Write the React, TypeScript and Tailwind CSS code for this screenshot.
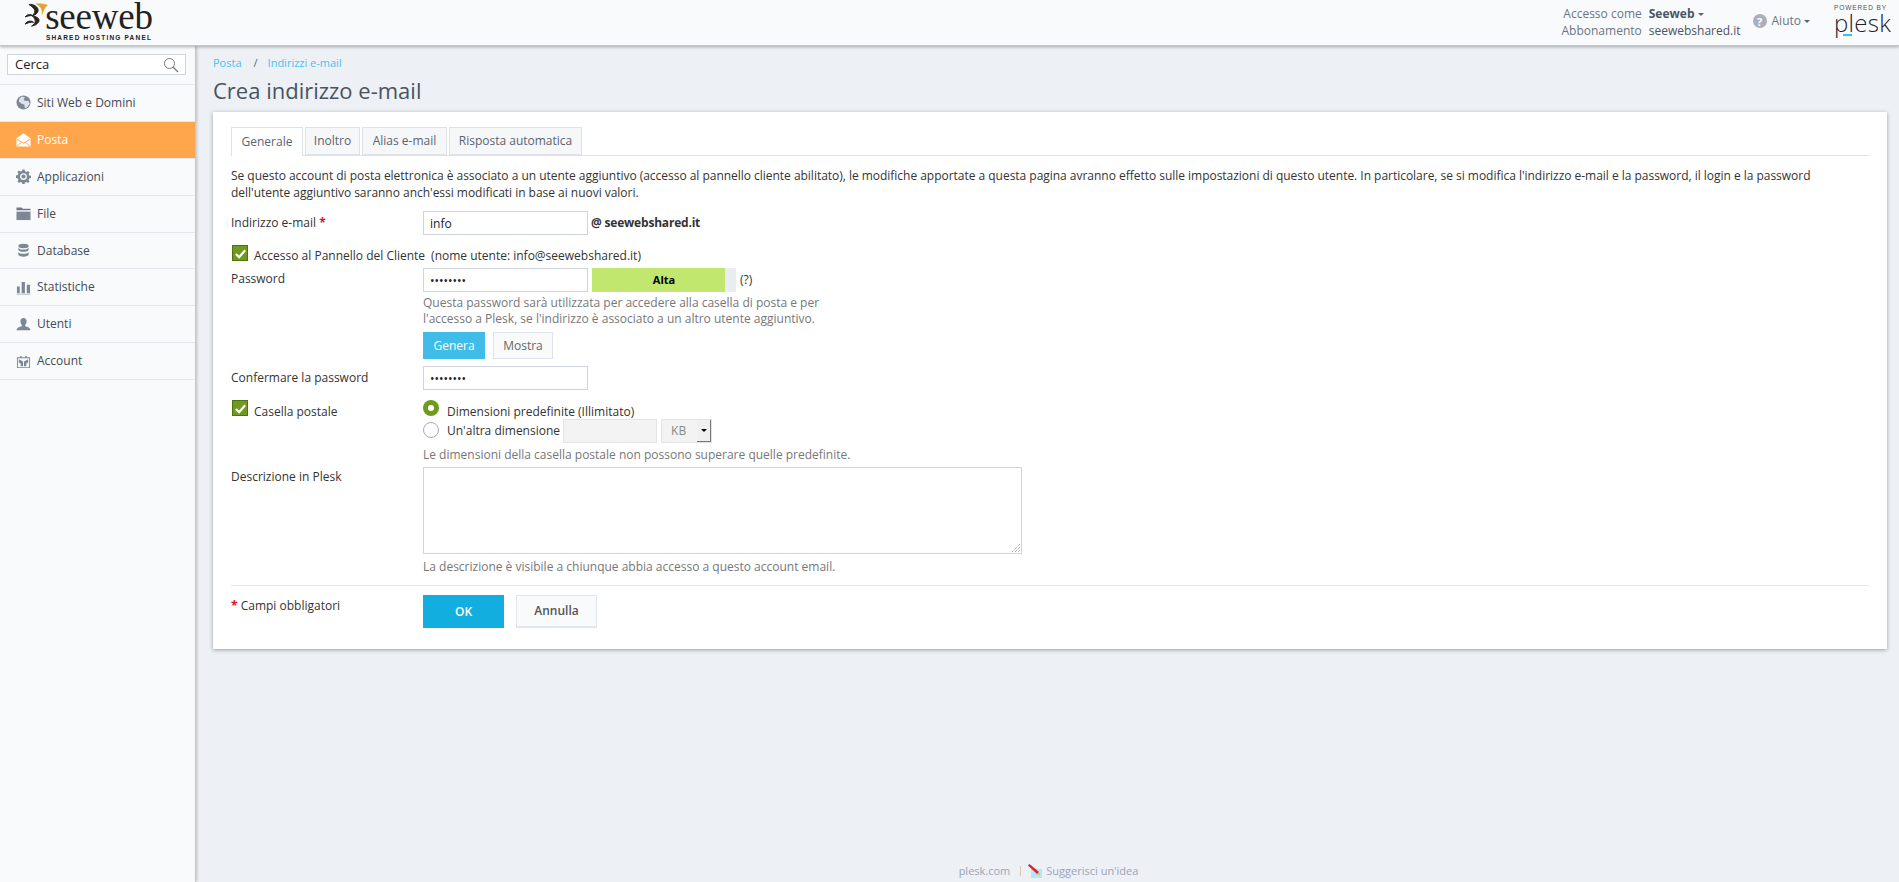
import React from "react";

const IconGlobe = () => (
  <svg viewBox="0 0 16 16" className="w-[15px] h-[15px]">
    <circle cx="8" cy="8" r="7.5" fill="#7d8894" />
    <path d="M6 1.500 9.500 2.500 8 5 10 6.500 13 6 14.800 9 12 13 9.500 14.500 9 10.500 5.500 9 3 7 3.500 4z" fill="#dfe3e8" />
  </svg>
);
const IconMail = () => (
  <svg viewBox="0 0 16 16" className="w-[16px] h-[16px]">
    <path d="M0.500 6 8 0.800 15.500 6V15H0.500z" fill="#fff" />
    <path d="M1 7.200 8 11.400 15 7.200M1 14.600 6 10.400M15 14.600 10 10.400" fill="none" stroke="#ffa64d" strokeWidth="1" />
  </svg>
);
const IconGear = () => (
  <svg viewBox="0 0 16 16" className="w-[15px] h-[15px]">
    <path
      d="M6.800 0.500h2.400l.4 2 1.500.6 1.700-1.100 1.700 1.700-1.100 1.700.6 1.500 2 .4v2.400l-2 .4-.6 1.500 1.100 1.700-1.700 1.700-1.700-1.100-1.500.6-.4 2H6.800l-.4-2-1.500-.6-1.700 1.100-1.700-1.700 1.100-1.700-.6-1.500-2-.4V6.800l2-.4.6-1.500L1.500 3.200l1.700-1.700 1.700 1.100 1.500-.6z"
      fill="#7d8894"
    />
    <circle cx="8" cy="8" r="3.600" fill="#f9fafc" />
    <circle cx="8" cy="8" r="2.200" fill="#7d8894" />
  </svg>
);
const IconFolder = () => (
  <svg viewBox="0 0 16 16" className="w-[15px] h-[15px]">
    <path d="M0.500 1.500h5.500l1.200 1.500h8.300v1.500H0.500z" fill="#6f7a86" />
    <path d="M0.500 6h15v9h-15z" fill="#7d8894" />
  </svg>
);
const IconDb = () => (
  <svg viewBox="0 0 16 16" className="w-[15px] h-[15px]">
    <ellipse cx="8" cy="3.200" rx="5.500" ry="2.400" fill="#7d8894" />
    <path d="M2.500 5v2.200C2.500 8.500 5 9.400 8 9.400s5.500-.9 5.500-2.200V5C13 6.300 10.500 7 8 7S3 6.300 2.500 5z" fill="#7d8894" />
    <path d="M2.500 9.500v2.700C2.500 13.500 5 14.600 8 14.600s5.500-1.100 5.500-2.400V9.500C13 10.800 10.500 11.500 8 11.500S3 10.800 2.500 9.500z" fill="#7d8894" />
  </svg>
);
const IconChart = () => (
  <svg viewBox="0 0 16 16" className="w-[15px] h-[15px]">
    <path d="M1 7h3v7H1zM6 2h3.500v12H6zM11.500 5H15v9h-3.500z" fill="#7d8894" />
    <path d="M0.500 14.700h15v1h-15z" fill="#b6bcc4" />
  </svg>
);
const IconUser = () => (
  <svg viewBox="0 0 16 16" className="w-[15px] h-[15px]">
    <path d="M8 1c2 0 3.300 1.500 3.300 3.600 0 1.800-.8 3.300-1.500 4v1.300c1.800.5 5.200 1.200 5.700 4.100H.5c.5-2.900 3.900-3.600 5.700-4.100V8.600c-.7-.7-1.500-2.200-1.500-4C4.700 2.500 6 1 8 1z" fill="#7d8894" />
  </svg>
);
const IconAccount = () => (
  <svg viewBox="0 0 16 16" className="w-[15px] h-[15px]">
    <path d="M1 3.500h3.500V2h1.500v1.500h4V2h1.500v1.500H15v11.500H1zM2 4.500v9.500h12V4.500z" fill="#7d8894" />
    <path d="M3 5.500 7.500 8v5H5V10L3 9zM13 5.500 8.500 8v5H11V10L13 9z" fill="#7d8894" />
  </svg>
);

const NAV = [
  { label: "Siti Web e Domini", icon: <IconGlobe /> },
  { label: "Posta", icon: <IconMail />, active: true },
  { label: "Applicazioni", icon: <IconGear /> },
  { label: "File", icon: <IconFolder /> },
  { label: "Database", icon: <IconDb /> },
  { label: "Statistiche", icon: <IconChart /> },
  { label: "Utenti", icon: <IconUser /> },
  { label: "Account", icon: <IconAccount /> },
];

const Caret = () => (
  <span className="inline-block ml-[3px] align-middle w-0 h-0 border-x-[3px] border-x-transparent border-t-[3px] border-t-[#5a6675]" />
);

const Check = () => (
  <span className="flex w-4 h-4 ml-px items-center justify-center bg-[#6d9a1f] border border-[#4d7410] shrink-0">
    <svg viewBox="0 0 14 14" className="w-[13px] h-[13px]">
      <path d="M2 7.500 5.500 11 12 3.500" fill="none" stroke="#fff" strokeWidth="2.400" />
    </svg>
  </span>
);

const TextInput = ({ value, type = "text" }: { value: string; type?: string }) => (
  <input
    readOnly
    type={type}
    value={value}
    className="w-[165px] h-6 px-[6px] border border-[#cfd4de] bg-white text-[12px] text-[#222] outline-none"
  />
);

const Tab = ({ label, width, active }: { label: string; width: string; active?: boolean }) => (
  <div
    className={
      width +
      " flex items-center justify-center border border-[#dfe2e8] text-[#5b6470] " +
      (active ? "h-[29px] border-b-0 bg-white -mb-px" : "h-[28px] bg-[#f6f7f9]")
    }
  >
    {label}
  </div>
);

const Hint = ({ children, className }: { children: React.ReactNode; className?: string }) => (
  <div className={"text-[12px] leading-4 text-[#77777a] " + (className || "")}>{children}</div>
);

export default function App() {
  return (
    <div className="h-[882px] flex flex-col overflow-hidden bg-[#edf0f5] font-['Open_Sans',sans-serif] text-[12px] text-[#333]">
      <header className="relative z-20 h-[46px] shrink-0 flex bg-[#f9fafc] border-b border-[#c4c8ce] shadow-[0_1px_3px_rgba(0,0,0,0.3)]">
        <div className="pl-[25px] flex">
          <svg viewBox="30 5 70 75" className="w-[23px] h-[25px] mt-[2px]">
            <g fill="#2a2420" stroke="#2a2420" strokeWidth="3">
              <path d="M42 12C55 10 70 18 70 30 70 38 62 44 52 46 60 40 62 32 58 26 54 20 48 16 42 12Z" />
              <path d="M30 50C36 42 46 40 54 46 46 45 38 47 30 50Z" />
              <path d="M52 47C64 48 76 54 72 64 68 72 60 76 50 78 58 72 64 66 60 58 58 52 54 49 52 47Z" />
              <path d="M30 72C36 62 48 60 56 66 48 65 38 68 30 72Z" />
            </g>
            <path d="M64 10C76 9 90 11 98 14 92 18 88 26 82 42 84 30 80 18 64 10Z" fill="#e0a530" stroke="#e0a530" strokeWidth="2" />
          </svg>
          <div className="-ml-[2px] flex flex-col items-center w-[106px]">
            <div className="font-['Liberation_Serif',serif] text-[37px] leading-[34px] tracking-[-0.200px] text-[#26211e]">seeweb</div>
            <div className="font-['Liberation_Sans',sans-serif] font-bold text-[6.500px] leading-2 tracking-[1.200px] text-[#26211e] whitespace-nowrap">SHARED HOSTING PANEL</div>
          </div>
        </div>
        <div className="ml-auto flex items-start">
          <div className="pt-[5px] grid grid-cols-[auto_auto] gap-x-[7px] leading-[17px] text-[#6b7583]">
            <div className="text-right">Accesso come</div>
            <div className="font-bold text-[#4b5563]">
              Seeweb
              <Caret />
            </div>
            <div className="text-right">Abbonamento</div>
            <div className="text-[#4b5563]">seewebshared.it</div>
          </div>
          <div className="ml-[12px] pt-[12px] flex items-center text-[#6b7583]">
            <span className="w-[14px] h-[14px] mr-[5px] rounded-full bg-[#a9b0ba] flex items-center justify-center text-white text-[11px] font-bold leading-none">?</span>
            Aiuto
            <Caret />
          </div>
          <div className="ml-[24px] mr-[13px] pt-[4px] w-[52px] flex flex-col">
            <div className="text-[6.500px] leading-2 tracking-[0.900px] text-[#555] whitespace-nowrap font-['Liberation_Sans',sans-serif]">POWERED BY</div>
            <div className="text-[24px] leading-[22px] text-[#20242a] font-light tracking-[0.300px]">plesk</div>
            <div className="ml-[9px] w-[9px] h-[2px] bg-[#2ec4f0]" />
          </div>
        </div>
      </header>

      <div className="flex-1 flex min-h-0">
        <aside className="relative z-10 w-[196px] shrink-0 bg-[#f9fafc] border-r border-[#c4c8ce] shadow-[1px_0_3px_rgba(0,0,0,0.2)]">
          <div className="h-[39px] pt-2 px-[7px] border-b border-[#e3e6ec]">
            <div className="w-[179px] h-[21px] flex items-center justify-between px-[7px] bg-white border border-[#cfd4de] text-[#222] text-[13px]">
              Cerca
              <svg viewBox="0 0 16 16" className="w-4 h-4 -mr-px">
                <circle cx="6.500" cy="6.500" r="5" fill="none" stroke="#777" strokeWidth="1" />
                <path d="M10 10 15 15" stroke="#777" strokeWidth="1.300" />
              </svg>
            </div>
          </div>
          {NAV.map((item) => (
            <div
              key={item.label}
              className={
                "h-[36.9px] flex items-center pl-4 gap-[6px] border-b border-[#e3e6ec] " +
                (item.active ? "bg-[#ffa64d] text-white" : "text-[#444b55]")
              }
            >
              <span className="w-[15px] flex justify-center">{item.icon}</span>
              {item.label}
            </div>
          ))}
        </aside>

        <main className="flex-1 min-w-0 flex flex-col pl-[17px] pr-3">
          <div className="pt-[9px] flex leading-4 text-[#45c3ee] text-[11px]">
            <span>Posta</span>
            <span className="ml-3 mr-[10px] text-[#666]">/</span>
            <span>Indirizzi e-mail</span>
          </div>
          <h1 className="mt-[5px] text-[22px] leading-7 text-[#4a5360] font-normal">Crea indirizzo e-mail</h1>

          <section className="mt-2 h-[537px] px-[18px] pt-[15px] bg-white shadow-[0_1px_4px_rgba(0,0,0,0.35)]">
            <div className="flex gap-[2px] border-b border-[#dfe2e8]">
              <Tab label="Generale" width="w-[72px]" active />
              <Tab label="Inoltro" width="w-[55px]" />
              <Tab label="Alias e-mail" width="w-[85px]" />
              <Tab label="Risposta automatica" width="w-[133px]" />
            </div>
            <p className="mt-[11px] leading-[17px] max-w-[1600px] tracking-[-0.024px]">
              Se questo account di posta elettronica è associato a un utente aggiuntivo (accesso al pannello cliente abilitato), le modifiche apportate a questa pagina avranno effetto sulle impostazioni di questo utente. In particolare, se si modifica l'indirizzo e-mail e la password, il login e la password dell'utente aggiuntivo saranno anch'essi modificati in base ai nuovi valori.
            </p>

            <div className="mt-[10px] flex">
              <div className="w-[192px] leading-6">
                Indirizzo e-mail <span className="text-[#e0102a] font-bold">*</span>
              </div>
              <TextInput value="info" />
              <div className="ml-[3px] leading-6 font-bold tracking-[-0.200px]">@ seewebshared.it</div>
            </div>

            <div className="mt-[10px] h-[19px] flex items-start">
              <Check />
              <span className="ml-[6px] mt-[3px] leading-4">Accesso al Pannello del Cliente</span>
              <span className="ml-[6px] mt-[3px] leading-4">(nome utente: info@seewebshared.it)</span>
            </div>

            <div className="mt-[4px] flex">
              <div className="w-[192px] leading-[22px]">Password</div>
              <div>
                <div className="flex items-center">
                  <TextInput value="12345678" type="password" />
                  <div className="ml-[4px] w-[144px] h-6 bg-[#e9edf1]">
                    <div className="w-[133px] h-6 pl-[11px] bg-[#c2e76f] flex items-center justify-center font-bold text-[11px] text-black">Alta</div>
                  </div>
                  <span className="ml-[4px]">(?)</span>
                </div>
                <Hint className="mt-[3px]">
                  Questa password sarà utilizzata per accedere alla casella di posta e per
                  <br />
                  l'accesso a Plesk, se l'indirizzo è associato a un altro utente aggiuntivo.
                </Hint>
                <div className="mt-[5px] flex gap-2">
                  <div className="w-[62px] h-[27px] flex items-center justify-center bg-[#3fbce8] text-white">Genera</div>
                  <div className="w-[60px] h-[27px] flex items-center justify-center bg-[#f9fafc] border border-[#dfe2e8] text-[#666]">Mostra</div>
                </div>
              </div>
            </div>

            <div className="mt-[7px] flex">
              <div className="w-[192px] leading-6">Confermare la password</div>
              <TextInput value="12345678" type="password" />
            </div>

            <div className="mt-[10px] flex">
              <div className="w-[192px] flex items-start">
                <Check />
                <span className="ml-[6px] mt-[3px]">Casella postale</span>
              </div>
              <div>
                <div className="flex items-start h-[19px]">
                  <span className="w-4 h-4 rounded-full bg-[#6d9a1f] flex items-center justify-center">
                    <span className="w-[6px] h-[6px] rounded-full bg-white" />
                  </span>
                  <span className="ml-[8px] mt-1 leading-4">Dimensioni predefinite (Illimitato)</span>
                </div>
                <div className="flex items-start h-6">
                  <span className="mt-[3px] w-4 h-4 rounded-full bg-white border border-[#aaa]" />
                  <span className="ml-[8px] leading-6">Un'altra dimensione</span>
                  <div className="ml-[3px] w-[94px] h-6 bg-[#f3f3f3] border border-[#e4e4e4]" />
                  <div className="ml-1 w-[51px] h-6 flex bg-[#f3f3f3] border border-[#e4e4e4] text-[#888]">
                    <span className="flex-1 pl-[9px] leading-[22px]">KB</span>
                    <span className="w-[14px] bg-[#f0f0f0] border-r border-b border-[#777] flex items-center justify-center">
                      <span className="w-0 h-0 border-x-[3px] border-x-transparent border-t-[3px] border-t-black" />
                    </span>
                  </div>
                </div>
              </div>
            </div>
            <Hint className="ml-[192px] mt-1">Le dimensioni della casella postale non possono superare quelle predefinite.</Hint>

            <div className="mt-1 flex">
              <div className="w-[192px] leading-5">Descrizione in Plesk</div>
              <div className="w-[599px] h-[87px] border border-[#cfd4de] bg-white flex items-end justify-end">
                <svg viewBox="0 0 10 10" className="w-[10px] h-[10px]">
                  <path d="M9 1 1 9M9 4 4 9M9 7 7 9" stroke="#888" strokeWidth="1" strokeDasharray="1 1" />
                </svg>
              </div>
            </div>
            <Hint className="ml-[192px] mt-[5px]">La descrizione è visibile a chiunque abbia accesso a questo account email.</Hint>

            <div className="mt-[10px] border-t border-[#e6e8ec] pt-[9px] flex">
              <div className="w-[192px] leading-[22px]">
                <span className="text-[#e0102a] font-bold">*</span> Campi obbligatori
              </div>
              <div className="flex gap-3">
                <div className="w-[81px] h-[33px] flex items-center justify-center bg-[#12aee0] text-white font-semibold">OK</div>
                <div className="w-[81px] h-[33px] flex items-center justify-center bg-[#f9fafc] border border-[#e2e5ea] border-b-2 text-[#555] font-semibold">Annulla</div>
              </div>
            </div>
          </section>

          <footer className="mt-auto mb-[3px] flex justify-center items-center leading-4 text-[11px] text-[#9aa5b5] pr-[3px]">
            <span>plesk.com</span>
            <span className="ml-[10px] mr-[7px] h-[10px] border-l border-[#d9c9a8]" />
            <svg viewBox="0 0 14 14" className="w-[14px] h-[14px] mr-1">
              <path d="M3 5h11v9H3z" fill="#b5e6fa" />
              <path d="M0 1.500 1.500 0 11 8 9 10z" fill="#d8232a" />
              <path d="M9 10 11 8 12 11z" fill="#e3b23c" />
            </svg>
            <span>Suggerisci un'idea</span>
          </footer>
        </main>
      </div>
    </div>
  );
}
